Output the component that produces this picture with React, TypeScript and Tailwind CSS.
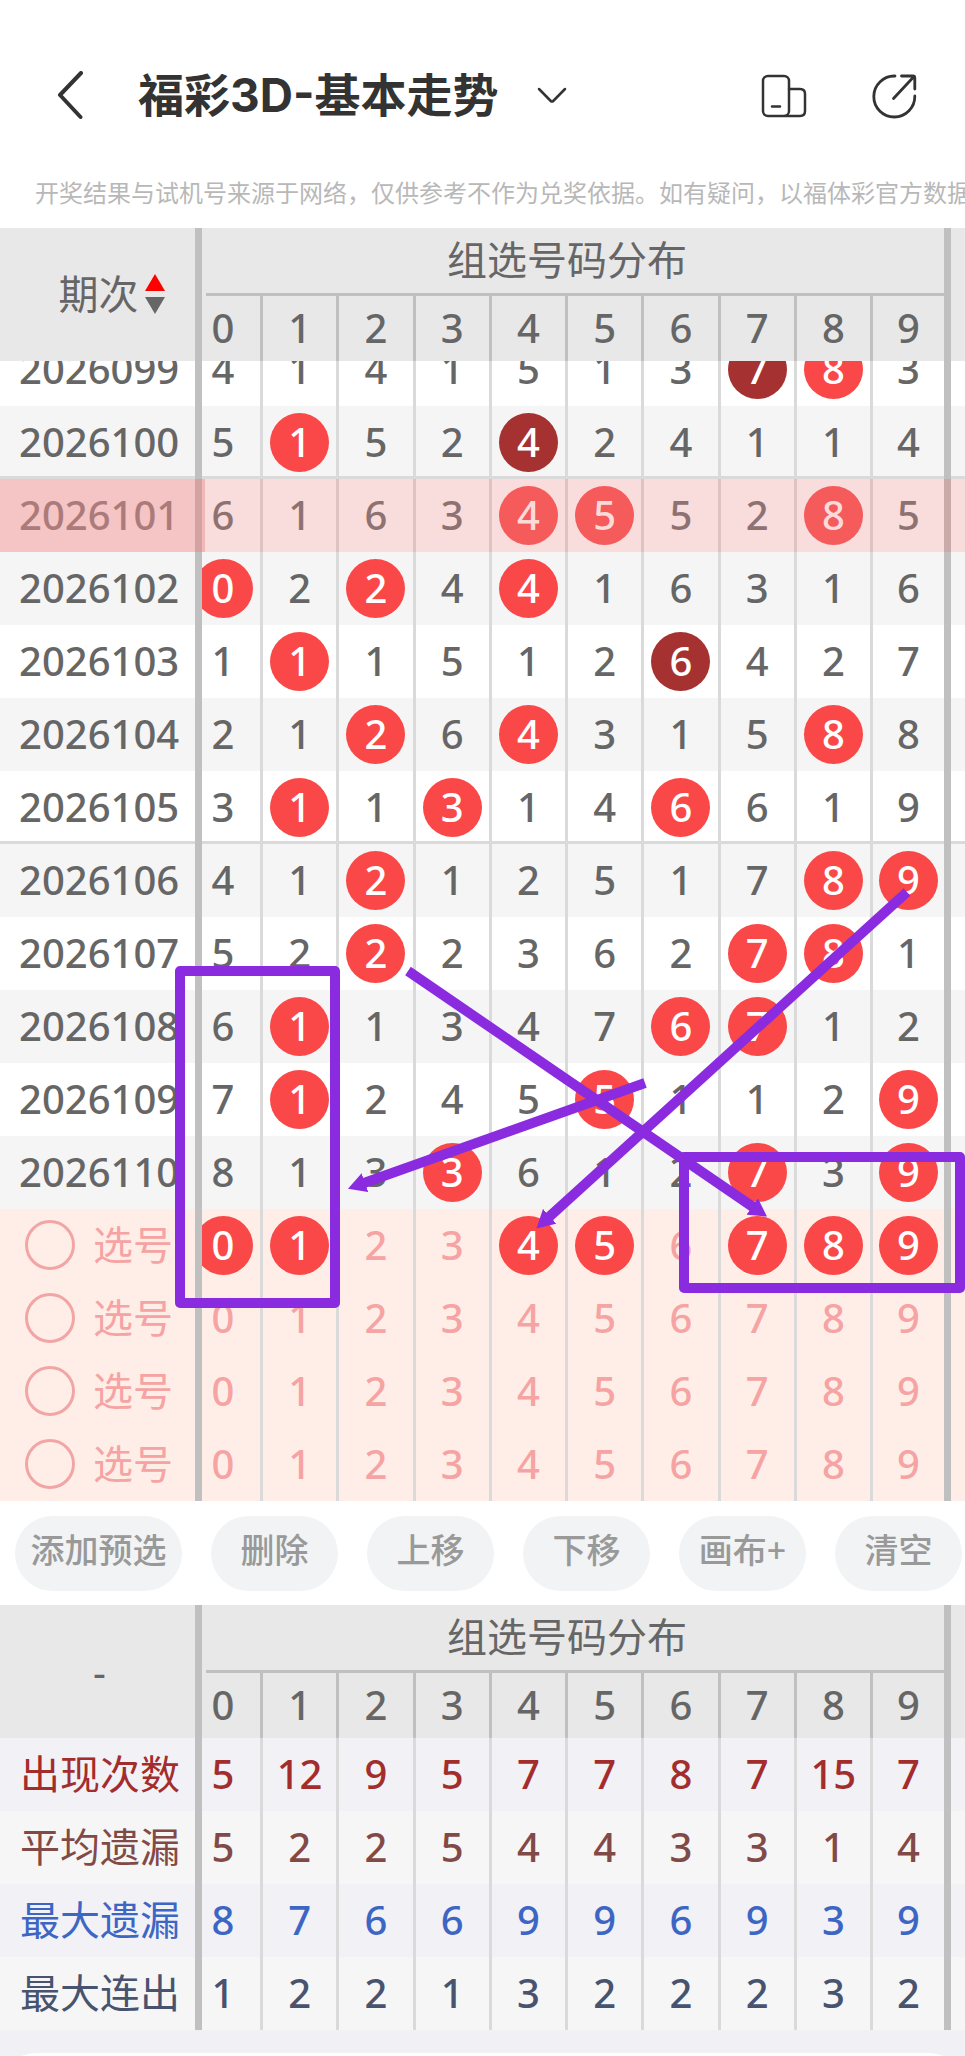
import { useState } from "react";

type Row = { id: string; nums: number[]; hits: number[]; dark?: number[] };

const digits = Array.from({ length: 10 }).map((_, i) => i);

const rows: Row[] = [
  { id: "2026099", nums: [4, 1, 4, 1, 5, 1, 3, 7, 8, 3], hits: [8], dark: [7] },
  { id: "2026100", nums: [5, 1, 5, 2, 4, 2, 4, 1, 1, 4], hits: [1], dark: [4] },
  { id: "2026101", nums: [6, 1, 6, 3, 4, 5, 5, 2, 8, 5], hits: [4, 5, 8] },
  { id: "2026102", nums: [0, 2, 2, 4, 4, 1, 6, 3, 1, 6], hits: [0, 2, 4] },
  { id: "2026103", nums: [1, 1, 1, 5, 1, 2, 6, 4, 2, 7], hits: [1], dark: [6] },
  { id: "2026104", nums: [2, 1, 2, 6, 4, 3, 1, 5, 8, 8], hits: [2, 4, 8] },
  { id: "2026105", nums: [3, 1, 1, 3, 1, 4, 6, 6, 1, 9], hits: [1, 3, 6] },
  { id: "2026106", nums: [4, 1, 2, 1, 2, 5, 1, 7, 8, 9], hits: [2, 8, 9] },
  { id: "2026107", nums: [5, 2, 2, 2, 3, 6, 2, 7, 8, 1], hits: [2, 7, 8] },
  { id: "2026108", nums: [6, 1, 1, 3, 4, 7, 6, 7, 1, 2], hits: [1, 6, 7] },
  { id: "2026109", nums: [7, 1, 2, 4, 5, 5, 1, 1, 2, 9], hits: [1, 5, 9] },
  { id: "2026110", nums: [8, 1, 3, 3, 6, 1, 2, 7, 3, 9], hits: [3, 7, 9] },
];

const stats = [
  { label: "出现次数", nums: [5, 12, 9, 5, 7, 7, 8, 7, 15, 7], style: "bg-[#f1f1f6] text-[#a32c2c]" },
  { label: "平均遗漏", nums: [5, 2, 2, 5, 4, 4, 3, 3, 1, 4], style: "bg-[#f6f6f6] text-[#824a46]" },
  { label: "最大遗漏", nums: [8, 7, 6, 6, 9, 9, 6, 9, 3, 9], style: "bg-[#f1f1f6] text-[#3d66c4]" },
  { label: "最大连出", nums: [1, 2, 2, 1, 3, 2, 2, 2, 3, 2], style: "bg-[#f6f6f6] text-[#48536f]" },
];

const actions = ["删除", "上移", "下移", "画布+", "清空"];

function Columns() {
  return (
    <colgroup>
      <col className="w-[202px]" />
      <col className="w-[58px]" />
      {digits.slice(1, 9).map((d) => (
        <col key={d} />
      ))}
      <col className="w-[74px]" />
      <col className="w-[21px]" />
    </colgroup>
  );
}

function TableHead({ children }: { children: React.ReactNode }) {
  return (
    <thead className="bg-[#e8e8e8] text-[#666]">
      <tr>
        <th rowSpan={2} className="border-r-[7px] border-[#c0c0c0] pl-1 font-normal">
          {children}
        </th>
        <th colSpan={10} className="font-normal">
          <div className="ml-1 flex h-[68px] items-center justify-center border-b-[3px] border-[#c0c0c0] pr-4 pb-[2px]">
            组选号码分布
          </div>
        </th>
        <th rowSpan={2} className="border-l-[7px] border-[#c0c0c0]" />
      </tr>
      <tr>
        {digits.map((d) => (
          <th
            key={d}
            className={`font-medium ${d === 0 ? "" : "border-l-[3px] border-[#c0c0c0]"}`}
          >
            <div className={`flex h-[65px] items-center justify-center pb-[2px] ${d === 0 ? "pr-4" : ""}`}>
              {d}
            </div>
          </th>
        ))}
      </tr>
    </thead>
  );
}

// the first column is scrolled partly under the label column
function NumberCell({ index, ball, short, className, children }: {
  index: number;
  ball?: string;
  short?: boolean;
  className?: string;
  children: React.ReactNode;
}) {
  return (
    <td className={`${index === 0 ? "" : "border-l-[3px] border-[#dadada]"} ${className ?? ""}`}>
      <div
        className={`flex justify-end overflow-hidden ${short ? "h-[45px] items-end" : "h-[73px]"}`}
      >
        <div
          className={`flex h-[73px] shrink-0 items-center justify-center ${index === 0 ? "w-[74px]" : "w-full"}`}
        >
          <span
            className={`flex size-[59px] items-center justify-center rounded-full pb-[2px] ${ball ?? ""}`}
          >
            {children}
          </span>
        </div>
      </div>
    </td>
  );
}

function TrendRow({ row, index }: { row: Row; index: number }) {
  const active = row.id === "2026101";
  const ruled = row.id === "2026100" || row.id === "2026105";
  const short = index === 0;
  const rule = ruled ? "shadow-[inset_0_-3px_0_#dadada]" : "";
  const grey = index < 3 ? index === 1 : index % 2 === 1;
  let style = grey ? "bg-[#f5f5f5] text-[#666]" : "bg-white text-[#666]";
  if (active) style = "bg-[#f9dcdc] text-[#8e7272]";

  function ball(d: number): string | undefined {
    if (row.dark?.includes(d)) return "bg-[#a53131] text-white";
    if (!row.hits.includes(d)) return undefined;
    return active ? "bg-[#f55b5b] text-[#fbdada]" : "bg-[#fa4848] text-white";
  }

  function line(d: number): string {
    if (!active) return "";
    return d === 0 ? "border-l-[3px] border-[#f2b8b8]" : "border-[#dfc3c3]!";
  }

  return (
    <tr className={style}>
      <td
        className={`border-r-[7px] ${rule} ${active ? "border-[#d3a2a2] bg-[#f5c4c4] text-[#ab7a7a]" : "border-[#c0c0c0]"}`}
      >
        <div className={`flex overflow-hidden ${short ? "h-[45px] items-end" : "h-[73px]"}`}>
          <div className="flex h-[73px] items-center pb-[2px] pl-[19px]">{row.id}</div>
        </div>
      </td>
      {row.nums.map((n, d) => (
        <NumberCell key={d} index={d} ball={ball(d)} short={short} className={`${rule} ${line(d)}`}>
          {n}
        </NumberCell>
      ))}
      <td className={`border-l-[7px] ${rule} ${active ? "border-[#caa9a9]" : "border-[#c0c0c0]"}`} />
    </tr>
  );
}

function PickRow({ row, picked, onPick }: {
  row: number;
  picked: number[];
  onPick: (d: number) => void;
}) {
  return (
    <tr className="bg-[#ffeee8] text-[#f5a3a3]">
      <td className="border-r-[7px] border-[#c0c0c0]">
        <label className="flex h-[73px] items-center gap-[18px] pb-[2px] pl-[25px] font-normal">
          <input
            type="radio"
            name="pick"
            value={row}
            className="size-[50px] shrink-0 appearance-none rounded-full border-[3px] border-[#f2a5a5] checked:bg-[#f5a3a3]"
          />
          选号
        </label>
      </td>
      {digits.map((d) => (
        <NumberCell
          key={d}
          index={d}
          ball={picked.includes(d) ? "bg-[#fa4848] text-white" : undefined}
        >
          <button type="button" onClick={() => onPick(d)}>
            {d}
          </button>
        </NumberCell>
      ))}
      <td className="border-l-[7px] border-[#c0c0c0]" />
    </tr>
  );
}

function Marks() {
  return (
    <svg
      viewBox="0 0 965 1273"
      className="pointer-events-none absolute top-0 left-0 w-full"
      fill="none"
      stroke="#8a2be0"
      strokeWidth="10"
      strokeLinejoin="round"
    >
      <defs>
        <marker id="head" markerUnits="userSpaceOnUse" markerWidth="18" markerHeight="20" refX="1" refY="10" orient="auto">
          <path d="M0 0 18 10 0 20Z" fill="#8a2be0" stroke="none" />
        </marker>
      </defs>
      <rect x="180" y="743" width="155" height="332" />
      <rect x="684" y="929" width="276" height="131" />
      <path d="M408 743 753 979" markerEnd="url(#head)" />
      <path d="M907 664 549 989" markerEnd="url(#head)" />
      <path d="M645 855 364 955" markerEnd="url(#head)" />
    </svg>
  );
}

export default function App() {
  const [picks, setPicks] = useState<number[][]>([[0, 1, 4, 5, 7, 8, 9], [], [], []]);

  function toggle(row: number, d: number): void {
    setPicks(
      picks.map((p, i) => {
        if (i !== row) return p;
        return p.includes(d) ? p.filter((x) => x !== d) : [...p, d];
      }),
    );
  }

  return (
    <div className="overflow-hidden bg-white font-['Noto_Sans','Noto_Sans_CJK_SC',sans-serif] text-[40px] leading-[48px] font-medium">
      <header className="flex h-36 items-center pt-12 pr-[48px] pl-[56px] text-[#333]">
        <button type="button" aria-label="返回">
          <svg width="28" height="50" viewBox="0 0 28 50" fill="none" stroke="currentColor" strokeWidth="4" strokeLinecap="round" strokeLinejoin="round">
            <path d="M25 2 4 24 24.500 46" />
          </svg>
        </button>
        <h1 className="ml-[54px] pb-[2px] font-['Inter','Noto_Sans_CJK_SC',sans-serif] text-[46px] font-bold whitespace-nowrap">
          福彩3D-基本走势
        </h1>
        <button type="button" aria-label="切换" className="ml-[38px]">
          <svg width="32" height="20" viewBox="0 0 32 20" fill="none" stroke="currentColor" strokeWidth="2.500" strokeLinecap="round" strokeLinejoin="round">
            <path d="M3 3 14.800 15Q16 16.200 17.200 15L29 3" />
          </svg>
        </button>
        <button type="button" aria-label="布局" className="ml-auto">
          <svg width="46" height="46" viewBox="0 0 46 46" fill="none" stroke="currentColor" strokeWidth="2.500" strokeLinecap="round" strokeLinejoin="round">
            <rect x="2" y="3" width="26" height="40" rx="5" />
            <path d="M28 16h11q5 0 5 5v17q0 5-5 5H24M11 33.500h8" />
          </svg>
        </button>
        <button type="button" aria-label="分享" className="ml-[64px]">
          <svg width="46" height="46" viewBox="0 0 46 46" fill="none" stroke="currentColor" strokeWidth="2.800" strokeLinecap="round" strokeLinejoin="round">
            <path d="M24 3A20.500 20.500 0 1 0 43.800 23M22.500 25.500 43 3.500M30.500 3H42Q43.800 3 43.800 5V16" />
          </svg>
        </button>
      </header>
      <p className="overflow-hidden pt-[31px] pb-[17px] pl-[35px] text-2xl leading-9 font-normal whitespace-nowrap text-[#b8b8b8]">
        开奖结果与试机号来源于网络，仅供参考不作为兑奖依据。如有疑问，以福体彩官方数据
      </p>

      <main>
        <div className="relative">
          <table className="w-full table-fixed border-separate border-spacing-0">
            <Columns />
            <TableHead>
              <button type="button" className="ml-6 inline-flex items-center gap-[6px] pb-[2px]">
                期次
                <svg width="20" height="40" viewBox="0 0 20 40">
                  <path d="M10 0 20 17H0Z" fill="#f00" />
                  <path d="M0 23H20L10 40Z" fill="#666" />
                </svg>
              </button>
            </TableHead>
            <tbody>
              {rows.map((row, i) => (
                <TrendRow key={row.id} row={row} index={i} />
              ))}
              {picks.map((picked, i) => (
                <PickRow key={i} row={i} picked={picked} onPick={(d) => toggle(i, d)} />
              ))}
            </tbody>
          </table>
          <Marks />
        </div>

        <div className="flex h-[104px] items-center gap-[29px] px-[15px] text-[34px] whitespace-nowrap text-[#999]">
          <button type="button" className="h-[75px] w-[167px] shrink-0 rounded-full bg-[#f1f3f5] pb-[7px]">
            添加预选
          </button>
          {actions.map((a) => (
            <button key={a} type="button" className="h-[75px] w-[127px] shrink-0 rounded-full bg-[#f1f3f5] pb-[7px]">
              {a}
            </button>
          ))}
        </div>

        <table className="w-full table-fixed border-separate border-spacing-0">
          <Columns />
          <TableHead>-</TableHead>
          <tbody>
            {stats.map((s) => (
              <tr key={s.label} className={s.style}>
                <th className="border-r-[7px] border-[#c0c0c0] pb-[2px] pl-5 text-left font-normal">
                  {s.label}
                </th>
                {s.nums.map((n, d) => (
                  <NumberCell key={d} index={d}>
                    {n}
                  </NumberCell>
                ))}
                <td className="border-l-[7px] border-[#c0c0c0]" />
              </tr>
            ))}
          </tbody>
        </table>
      </main>

      <footer className="bg-[#f0f0f5] pt-[23px]">
        <div className="h-[3px] overflow-hidden">
          <div className="h-20 rounded-t-[36px] bg-white" />
        </div>
      </footer>
    </div>
  );
}
